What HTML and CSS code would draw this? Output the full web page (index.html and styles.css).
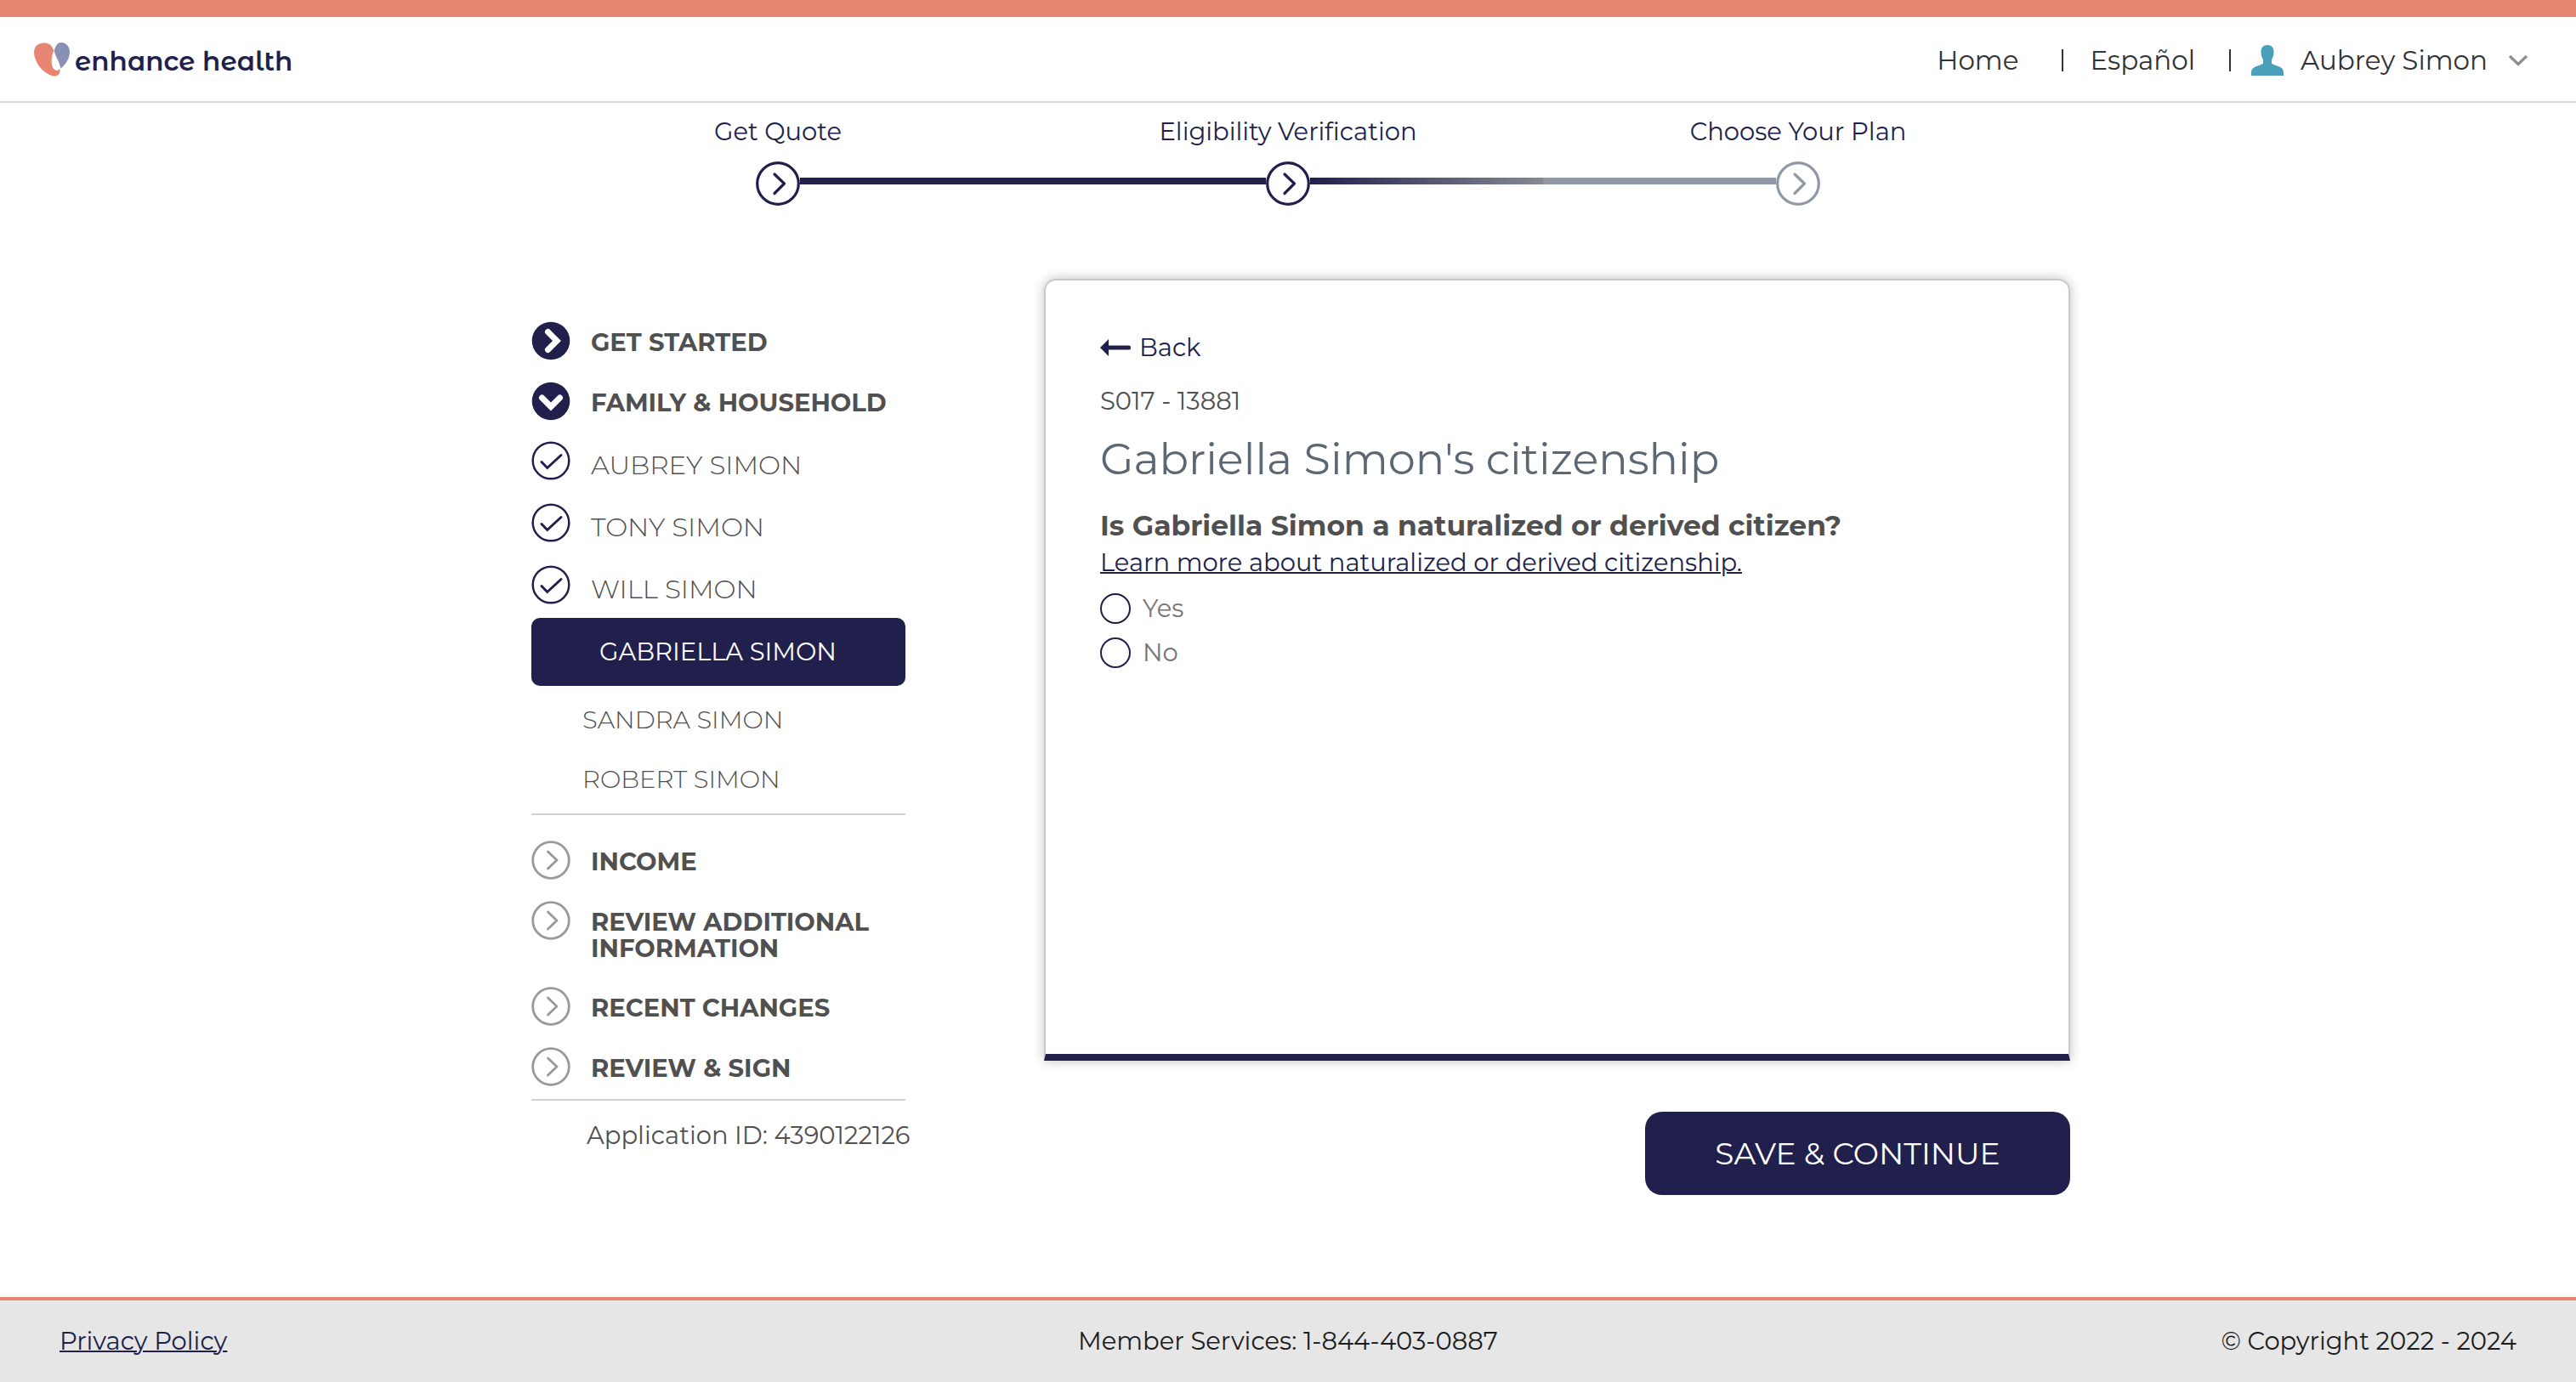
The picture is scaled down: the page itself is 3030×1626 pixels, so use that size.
FILE: index.html
```html
<!DOCTYPE html>
<html lang="en">
<head>
<meta charset="utf-8">
<meta name="viewport" content="width=device-width, initial-scale=1">
<title>Enhance Health - Eligibility Verification</title>
<link rel="stylesheet" href="styles.css">
</head>
<body>
<svg class="sprite" aria-hidden="true">
  <symbol id="step-next" viewBox="0 0 52 52">
    <circle cx="26" cy="26" r="24.3" fill="#fff" stroke="currentColor" stroke-width="3.2"/>
    <path d="M22 15 L33.500 26 L22 37.500" fill="none" stroke="currentColor" stroke-width="3.2" stroke-linecap="round" stroke-linejoin="round"/>
  </symbol>
  <symbol id="nav-next" viewBox="0 0 46 46">
    <circle cx="23" cy="23" r="21.3" fill="none" stroke="currentColor" stroke-width="2.800"/>
    <path d="M19.500 13 L30 23 L19.500 33" fill="none" stroke="currentColor" stroke-width="2.800" stroke-linecap="round" stroke-linejoin="round"/>
  </symbol>
  <symbol id="nav-check" viewBox="0 0 46 46">
    <circle cx="23" cy="23" r="21.3" fill="none" stroke="currentColor" stroke-width="2.500"/>
    <path d="M12 24.500 L18.700 31.500 L35 16.500" fill="none" stroke="currentColor" stroke-width="3" stroke-linecap="round"/>
  </symbol>
  <symbol id="nav-open" viewBox="0 0 46 46">
    <circle cx="23" cy="23" r="22.300" fill="currentColor"/>
    <path d="M12.500 19 L23 29.500 L33.500 19" fill="none" stroke="#fff" stroke-width="7" stroke-linecap="round"/>
  </symbol>
  <symbol id="nav-closed" viewBox="0 0 46 46">
    <circle cx="23" cy="23" r="22.300" fill="currentColor"/>
    <path d="M19.500 12.500 L30 23 L19.500 33.500" fill="none" stroke="#fff" stroke-width="7" stroke-linecap="round"/>
  </symbol>
</svg>

<header class="header">
  <a class="logo" href="#">
    <svg class="logo-mark" viewBox="0 0 42 40" aria-hidden="true">
      <path fill="#e78573" d="M11.500 0.500 C18 0 21.500 4 23.300 9.500 C21 15 20 20 21 26 C22 32 27 35 30.500 31 C31 37 28 40 23.500 39.500 C17 38.500 9 33 4.500 25.500 C1 19.500 -0.500 14 0.200 9.500 C1 4 5.500 0.800 11.500 0.500Z"/>
      <path fill="#8990b5" d="M23.700 10 C25.500 3 28 0 32 0 C38 0 42 5 42 11 C42 19 37 26 31.500 30.500 C30 23 25.500 17 23.700 10Z"/>
    </svg>
    <span class="logo-name">enhance health</span>
  </a>
  <nav class="top-nav">
    <a class="top-link" href="#">Home</a>
    <a class="top-link divided" href="#">Español</a>
    <button class="account divided" type="button">
      <svg class="account-icon" viewBox="0 0 38 36" aria-hidden="true"><path fill="#4a9fbb" d="M19 0 C24 0 26.500 3 26.500 8 C26.500 12 25.500 15 24 17 L24 21.500 C28 25 38 24.500 38 32 L38 36 L0 36 L0 32 C0 24.500 10 25 14 21.500 L14 17 C12.500 15 11.500 12 11.500 8 C11.500 3 14 0 19 0Z"/></svg>
      <span>Aubrey Simon</span>
      <svg class="account-caret" viewBox="0 0 24 14" aria-hidden="true"><path d="M2 2 L12 11.500 L22 2" fill="none" stroke="#8f8f8f" stroke-width="3.200"/></svg>
    </button>
  </nav>
</header>

<ol class="stepper">
  <li class="step done">
    <span class="step-label">Get Quote</span>
    <span class="step-track"><svg class="step-icon" aria-hidden="true"><use href="#step-next"/></svg></span>
  </li>
  <li class="step current">
    <span class="step-label">Eligibility Verification</span>
    <span class="step-track"><svg class="step-icon" aria-hidden="true"><use href="#step-next"/></svg></span>
  </li>
  <li class="step upcoming">
    <span class="step-label">Choose Your Plan</span>
    <span class="step-track"><svg class="step-icon" aria-hidden="true"><use href="#step-next"/></svg></span>
  </li>
</ol>

<div class="content">
  <nav class="sidebar" aria-label="Application sections">
    <ul class="nav-group">
      <li><a class="nav-item section" href="#"><svg class="nav-icon" aria-hidden="true"><use href="#nav-closed"/></svg><span class="nav-text">GET STARTED</span></a></li>
      <li>
        <a class="nav-item section" href="#"><svg class="nav-icon" aria-hidden="true"><use href="#nav-open"/></svg><span class="nav-text">FAMILY &amp; HOUSEHOLD</span></a>
        <ul class="members">
          <li><a class="nav-item member" href="#"><svg class="nav-icon" aria-hidden="true"><use href="#nav-check"/></svg><span class="nav-text">AUBREY SIMON</span></a></li>
          <li><a class="nav-item member" href="#"><svg class="nav-icon" aria-hidden="true"><use href="#nav-check"/></svg><span class="nav-text">TONY SIMON</span></a></li>
          <li><a class="nav-item member" href="#"><svg class="nav-icon" aria-hidden="true"><use href="#nav-check"/></svg><span class="nav-text">WILL SIMON</span></a></li>
        </ul>
        <ul class="members-left">
          <li><a class="nav-active" href="#" aria-current="page">GABRIELLA SIMON</a></li>
          <li><a class="nav-pending" href="#">SANDRA SIMON</a></li>
          <li><a class="nav-pending" href="#">ROBERT SIMON</a></li>
        </ul>
      </li>
    </ul>
    <ul class="nav-group later">
      <li><a class="nav-item section" href="#"><svg class="nav-icon" aria-hidden="true"><use href="#nav-next"/></svg><span class="nav-text">INCOME</span></a></li>
      <li><a class="nav-item section" href="#"><svg class="nav-icon" aria-hidden="true"><use href="#nav-next"/></svg><span class="nav-text">REVIEW ADDITIONAL INFORMATION</span></a></li>
      <li><a class="nav-item section" href="#"><svg class="nav-icon" aria-hidden="true"><use href="#nav-next"/></svg><span class="nav-text">RECENT CHANGES</span></a></li>
      <li><a class="nav-item section" href="#"><svg class="nav-icon" aria-hidden="true"><use href="#nav-next"/></svg><span class="nav-text">REVIEW &amp; SIGN</span></a></li>
    </ul>
    <p class="application-id">Application ID: 4390122126</p>
  </nav>

  <main class="main">
    <form class="form">
      <div class="card">
        <a class="back" href="#"><svg class="back-icon" viewBox="0 0 36 20" aria-hidden="true"><path fill="currentColor" d="M0 10 L10 0 L10 7.500 L34.500 7.500 Q36 7.500 36 10 Q36 12.500 34.500 12.500 L10 12.500 L10 20Z"/></svg>Back</a>
        <p class="page-code">S017 - 13881</p>
        <h1 class="title">Gabriella Simon's citizenship</h1>
        <fieldset class="question">
          <legend class="question-text">Is Gabriella Simon a naturalized or derived citizen?</legend>
          <a class="help-link" href="#">Learn more about naturalized or derived citizenship.</a>
          <label class="choice"><input class="radio" type="radio" name="naturalized" value="yes">Yes</label>
          <label class="choice"><input class="radio" type="radio" name="naturalized" value="no">No</label>
        </fieldset>
      </div>
      <button class="save" type="submit">SAVE &amp; CONTINUE</button>
    </form>
  </main>
</div>

<footer class="footer">
  <a class="privacy" href="#">Privacy Policy</a>
  <span>Member Services: 1-844-403-0887</span>
  <span class="copyright">© Copyright 2022 - 2024</span>
</footer>
</body>
</html>
```
FILE: styles.css
```css
:root {
  --navy: #211f4c;
  --coral: #e78573;
  --text: #505050;
  --slate: #8f98a4;
  --line: #d3d3d3;
}

* {
  box-sizing: border-box;
}

body {
  margin: 0;
  min-height: 100vh;
  display: flex;
  flex-direction: column;
  background: #fff;
  color: var(--text);
  font-family: Montserrat, Inter, "Open Sans", sans-serif;
  font-size: 29px;
  font-weight: 400;
  line-height: 32px;
}

ul,
ol {
  margin: 0;
  padding: 0;
  list-style: none;
}

a {
  color: inherit;
  text-decoration: none;
}

button {
  font: inherit;
  color: inherit;
  border: 0;
  background: none;
  cursor: pointer;
}

.sprite {
  display: none;
}

/* Header */
.header {
  display: flex;
  justify-content: space-between;
  align-items: center;
  height: 121px;
  padding: 0 56px 0 40px;
  border-top: 20px solid var(--coral);
  border-bottom: 2px solid #d9d9d9;
}

.logo {
  display: flex;
  align-items: center;
  gap: 6px;
  color: var(--navy);
}

.logo-mark {
  width: 42px;
  height: 40px;
}

.logo-name {
  font-family: "Montserrat Alternates", Montserrat, Inter, sans-serif;
  font-size: 31px;
  font-weight: 600;
  line-height: 40px;
  padding-top: 4px;
}

.top-nav {
  display: flex;
  align-items: center;
  padding-top: 2px;
  font-size: 31px;
  line-height: 40px;
  color: #333;
}

.divided {
  display: flex;
  align-items: center;
}

.divided::before {
  content: "";
  width: 2px;
  height: 26px;
  background: #333;
}

.top-link.divided {
  margin: 0 40px 0 50px;
  gap: 32px;
}

.account {
  padding: 0;
}

.account-icon {
  width: 38px;
  height: 36px;
  margin: 0 20px 0 24px;
}

.account-caret {
  width: 24px;
  height: 14px;
  margin-left: 24px;
}

/* Progress stepper */
.stepper {
  display: grid;
  grid-template-columns: repeat(3, 1fr);
  width: 100%;
  max-width: 1800px;
  margin: 0 auto;
  padding-top: 18px;
}

.step {
  --before: var(--navy);
  --after: var(--navy);
  text-align: center;
  color: var(--navy);
}

.step-label {
  display: block;
  margin-bottom: 19px;
}

.step-track {
  display: flex;
  align-items: center;
}

.step-track::before,
.step-track::after {
  content: "";
  flex: 1;
  height: 8px;
  margin-bottom: 6px;
  background: var(--before);
}

.step-track::after {
  background: var(--after);
}

.step-icon {
  width: 52px;
  height: 52px;
}

.step.done {
  --before: transparent;
}

.step.current {
  --after: linear-gradient(to right, var(--navy), #858992);
}

.step.upcoming {
  --before: var(--slate);
  --after: transparent;
}

.upcoming .step-icon {
  color: var(--slate);
}

/* Page body */
.content {
  display: flex;
  align-items: flex-start;
  gap: 163px;
  width: 100%;
  max-width: 1840px;
  margin: 0 auto;
  padding: 86px 0 60px 30px;
}

.sidebar {
  width: 440px;
  flex: none;
  padding-top: 50px;
}

.nav-item {
  display: flex;
  gap: 24px;
}

.nav-icon {
  flex: none;
  width: 46px;
  height: 46px;
  color: var(--navy);
}

.nav-text {
  padding: 9px 0 5px;
}

.nav-item.section {
  min-height: 46px;
  margin-bottom: 25px;
  font-weight: 700;
  line-height: 31px;
}

.nav-item.section:has(+ .members) {
  margin-bottom: 24px;
}

.members {
  display: grid;
  gap: 27px;
  margin-bottom: 16px;
}

.nav-item.member {
  height: 46px;
  font-size: 31px;
  font-weight: 300;
}

.nav-item.member .nav-text {
  padding-top: 12px;
}

.nav-active {
  display: block;
  padding: 24px 0 24px 80px;
  border-radius: 10px;
  background: var(--navy);
  color: #fff;
}

.nav-pending {
  display: block;
  padding: 24px 0 14px 60px;
  font-weight: 300;
}

.later {
  margin-top: 10px;
  padding: 30px 0 15px;
  border-top: 2px solid var(--line);
  border-bottom: 2px solid var(--line);
}

.later .nav-icon {
  color: #999;
}

.later li:last-child .nav-item {
  margin-bottom: 0;
}

.application-id {
  margin: 25px 0 0 65px;
  white-space: nowrap;
}

.main {
  flex: 1;
}

.form {
  display: flex;
  flex-direction: column;
  align-items: flex-end;
  gap: 60px;
}

.card {
  width: 100%;
  min-height: 920px;
  padding: 63px 64px;
  border: 2px solid #c8c8c8;
  border-bottom: 8px solid var(--navy);
  border-radius: 14px 14px 0 0;
  box-shadow: 0 0 14px rgba(0, 0, 0, 0.25);
}

.back {
  display: inline-flex;
  align-items: center;
  gap: 10px;
  color: var(--navy);
}

.back-icon {
  width: 36px;
  height: 20px;
}

.page-code {
  margin: 31px 0 0;
}

.title {
  margin: 20px 0 26px;
  color: #5c6773;
  font-size: 51px;
  font-weight: 400;
  line-height: 64px;
}

.question {
  margin: 0;
  padding: 0;
  border: 0;
}

.question-text {
  padding: 0;
  margin-bottom: 8px;
  font-size: 33px;
  font-weight: 700;
  line-height: 40px;
}

.help-link {
  display: block;
  width: fit-content;
  margin-bottom: 20px;
  color: var(--navy);
  text-decoration: underline;
  text-decoration-thickness: 2px;
}

.choice {
  display: flex;
  align-items: center;
  gap: 14px;
  margin-bottom: 16px;
  line-height: 36px;
  color: #777;
}

.radio {
  appearance: none;
  width: 36px;
  height: 36px;
  margin: 0;
  border: 2px solid var(--navy);
  border-radius: 50%;
}

.radio:checked {
  box-shadow: inset 0 0 0 7px #fff;
  background: var(--navy);
}

.save {
  width: 500px;
  padding: 29px 0;
  border-radius: 20px;
  background: var(--navy);
  color: #fff;
  font-size: 36px;
  line-height: 40px;
}

/* Footer */
.footer {
  display: grid;
  grid-template-columns: 1fr auto 1fr;
  align-items: center;
  height: 100px;
  margin-top: auto;
  padding: 0 70px;
  border-top: 4px solid var(--coral);
  background: #e6e6e6;
  color: #1c1c1c;
}

.privacy {
  justify-self: start;
  color: var(--navy);
  text-decoration: underline;
  text-decoration-thickness: 2px;
}

.copyright {
  justify-self: end;
}
```
